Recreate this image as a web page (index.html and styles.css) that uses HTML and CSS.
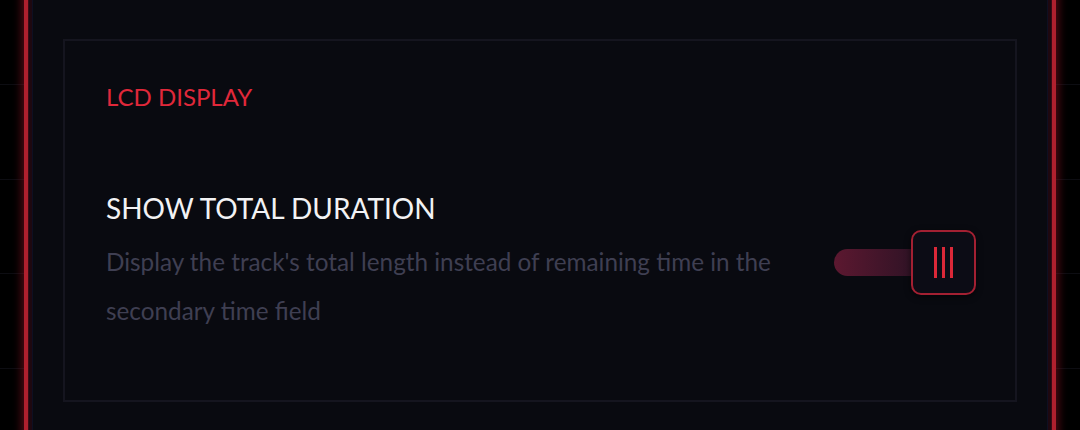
FILE: index.html
```html
<!DOCTYPE html>
<html lang="en">
<head>
    <meta charset="UTF-8">
    <meta name="viewport" content="width=device-width, initial-scale=1.0">
    <title>LCD Display Settings</title>
    <link rel="stylesheet" href="styles.css">
</head>
<body>
    <div class="frame">
        <section class="group">
            <h2 class="group-title">LCD DISPLAY</h2>
            <div class="setting">
                <div class="setting-text">
                    <h3 class="setting-name">SHOW TOTAL DURATION</h3>
                    <p class="setting-desc">Display the track's total length instead of remaining time in the secondary time field</p>
                </div>
                <button class="toggle on" aria-label="Show total duration">
                    <span class="track"></span>
                    <span class="knob">
                        <span class="grip"></span>
                        <span class="grip"></span>
                        <span class="grip"></span>
                    </span>
                </button>
            </div>
        </section>
    </div>
</body>
</html>
```

FILE: styles.css
```css
html, body {
    height: 100%;
}

body {
    margin: 0;
    overflow: hidden;
    background-color: #000;
    background-image: repeating-linear-gradient(to bottom, transparent 0, transparent 84px, #0d0d12 84px, #0d0d12 85px, transparent 85px, transparent 94.5px);
    font-family: "Lato", "Noto Sans", sans-serif;
}

.frame {
    margin: -60px 24px 0;
    height: 520px;
    box-sizing: border-box;
    padding: 95px 35px 0 35px;
    background-color: #090a10;
    border: 4px solid #b0202e;
    box-shadow: 0 0 8px 3px rgba(150, 20, 35, 0.5), inset 0 0 0 1px #3a0c16, inset 0 0 0 4px #1e0810, inset 0 0 0 5px #0e0f22;
}

.group {
    border: 2px solid #15151f;
    padding: 41px 39px 65px 41px;
}

.group-title {
    margin: 0 0 78px;
    color: #e0283a;
    font-size: 24px;
    font-weight: 400;
    line-height: 30px;
}

.setting {
    display: flex;
    align-items: center;
    justify-content: space-between;
}

.setting-text {
    max-width: 690px;
}

.setting-name {
    margin: 0 0 11px;
    color: #f2f2f4;
    font-size: 28px;
    font-weight: 400;
    line-height: 36px;
}

.setting-desc {
    margin: 0;
    color: #3f3f52;
    font-size: 24.3px;
    line-height: 49px;
}

.toggle {
    display: flex;
    align-items: center;
    padding: 0;
    border: none;
    background: none;
    cursor: pointer;
}

.track {
    width: 90px;
    height: 27px;
    margin-right: -13px;
    border-radius: 14px;
    background: linear-gradient(to right, #5c1830, #2a1224);
}

.knob {
    position: relative;
    display: flex;
    gap: 5px;
    justify-content: center;
    align-items: center;
    width: 61px;
    height: 61px;
    border: 2px solid #a32032;
    border-radius: 10px;
    background-color: #0c0c15;
    box-shadow: 0 2px 6px rgba(0, 0, 0, 0.6);
}

.grip {
    width: 3px;
    height: 31px;
    background-color: #dc2838;
}
```
